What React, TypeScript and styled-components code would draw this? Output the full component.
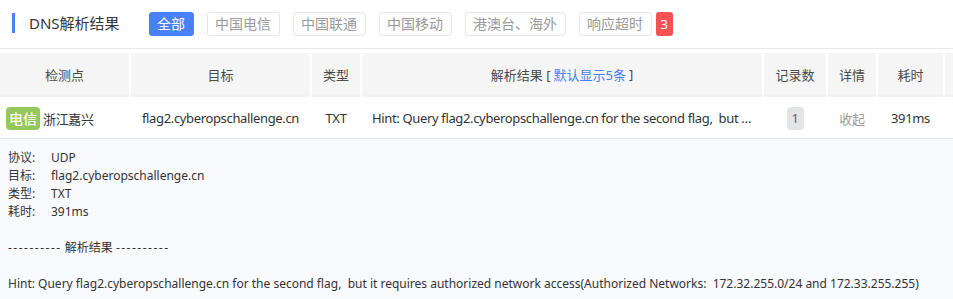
import styled, { createGlobalStyle } from "styled-components";

const GlobalStyle = createGlobalStyle`
  html, body {
    margin: 0;
    padding: 0;
    background: #fff;
    font-family: "Noto Sans", "Noto Sans CJK SC", sans-serif;
    color: #333;
  }
`;

const filters = ["全部", "中国电信", "中国联通", "中国移动", "港澳台、海外", "响应超时"];

const columns = [
  { key: "node", label: "检测点" },
  { key: "target", label: "目标" },
  { key: "type", label: "类型" },
  { key: "result", label: "解析结果" },
  { key: "count", label: "记录数" },
  { key: "detail", label: "详情" },
  { key: "time", label: "耗时" },
  { key: "extra", label: "" },
];

const detailLines = [
  { label: "协议:", value: "UDP" },
  { label: "目标:", value: "flag2.cyberopschallenge.cn" },
  { label: "类型:", value: "TXT" },
  { label: "耗时:", value: "391ms" },
];

const hint =
  "Hint: Query flag2.cyberopschallenge.cn for the second flag,  but it requires authorized network access(Authorized Networks:  172.32.255.0/24 and 172.33.255.255)";

export default function App() {
  return (
    <>
      <GlobalStyle />
      <StyledPanel>
        <div className="toolbar">
          <Title>DNS解析结果</Title>
          <div className="filters">
            {filters.map((f, i) => (
              <FilterButton key={f} $active={i === 0}>
                {f}
              </FilterButton>
            ))}
            <Badge>3</Badge>
          </div>
        </div>

        <TableGrid>
          {columns.map((c) => (
            <HeadCell key={c.key}>
              {c.key === "result" ? (
                <>
                  {c.label} [ <span className="blue">默认显示5条</span> ]
                </>
              ) : (
                c.label
              )}
            </HeadCell>
          ))}

          <BodyCell>
            <Tag>电信</Tag>
            浙江嘉兴
          </BodyCell>
          <BodyCell $center>flag2.cyberopschallenge.cn</BodyCell>
          <BodyCell $center>TXT</BodyCell>
          <BodyCell>
            <span className="ellipsis">{hint}</span>
          </BodyCell>
          <BodyCell $center>
            <CountChip>1</CountChip>
          </BodyCell>
          <BodyCell $center $muted>
            收起
          </BodyCell>
          <BodyCell $center>391ms</BodyCell>
          <BodyCell />
        </TableGrid>

        <Detail>
          {detailLines.map((l) => (
            <div className="line" key={l.label}>
              <span className="label">{l.label}</span>
              {l.value}
            </div>
          ))}
          <div className="line blank" />
          <div className="line">
            <span className="dashes">----------</span> 解析结果{" "}
            <span className="dashes">----------</span>
          </div>
          <div className="line blank" />
          <div className="line">{hint}</div>
        </Detail>
      </StyledPanel>
    </>
  );
}

const StyledPanel = styled.div`
  width: 953px;
  height: 299px;
  overflow: hidden;

  .toolbar {
    display: flex;
    align-items: center;
    padding-left: 12px;
    border-bottom: 1px solid #e8eaee;
    box-sizing: border-box;
    height: 49px;
  }

  .filters {
    display: flex;
    align-items: center;
    gap: 13px;
    margin-left: 29px;
    margin-top: -1px;
  }
`;

const Title = styled.div`
  border-left: 3px solid #4680f8;
  height: 20px;
  line-height: 20px;
  padding-left: 14px;
  font-size: 15px;
  color: #33373d;
  margin-top: -2px;
`;

const FilterButton = styled.div<{ $active?: boolean }>`
  height: 24px;
  box-sizing: border-box;
  padding: 0 7.5px;
  line-height: 22px;
  font-size: 14px;
  border-radius: 3px;
  border: 1px solid ${({ $active }) => ($active ? "#4a80f7" : "#e6e6e6")};
  background: ${({ $active }) => ($active ? "#4a80f7" : "#fff")};
  color: ${({ $active }) => ($active ? "#fff" : "#9a9a9a")};
`;

const Badge = styled.div`
  margin-left: -9px;
  height: 24px;
  min-width: 17px;
  box-sizing: border-box;
  border-radius: 3px;
  background: #f55353;
  color: #fff;
  font-size: 13px;
  line-height: 24px;
  text-align: center;
`;

const TableGrid = styled.div`
  display: grid;
  grid-template-columns: 129px 179px 48px 400px 62px 48px 65px 1fr;
  column-gap: 2px;
  padding-top: 4px;
  border-bottom: 1px solid #e6eaf0;
`;

const HeadCell = styled.div`
  height: 42px;
  background: #f5f5f5;
  border-bottom: 2px solid #eef1f6;
  display: flex;
  align-items: center;
  justify-content: center;
  font-size: 13px;
  color: #4a4a4a;
  white-space: nowrap;

  .blue {
    color: #4a80f7;
    margin: 0 3px;
  }
`;

const BodyCell = styled.div<{ $center?: boolean; $muted?: boolean }>`
  height: 40px;
  margin-top: 1px;
  display: flex;
  align-items: center;
  justify-content: ${({ $center }) => ($center ? "center" : "flex-start")};
  padding: ${({ $center }) => ($center ? "0" : "0 0 0 6px")};
  font-size: 13px;
  letter-spacing: -0.35px;
  color: ${({ $muted }) => ($muted ? "#9a9a9a" : "#333")};
  white-space: nowrap;
  min-width: 0;

  .ellipsis {
    display: block;
    overflow: hidden;
    text-overflow: ellipsis;
    white-space: pre;
    padding: 0 10px 0 4px;
  }
`;

const Tag = styled.span`
  display: inline-block;
  height: 23px;
  line-height: 23px;
  padding: 0 3px;
  border-radius: 4px;
  background: #94c85b;
  color: #fff;
  font-size: 14px;
  font-weight: 500;
  letter-spacing: 0;
  margin-right: 3px;
`;

const CountChip = styled.span`
  display: inline-block;
  height: 23px;
  line-height: 23px;
  min-width: 17px;
  text-align: center;
  border-radius: 4px;
  background: #e3e4e6;
  color: #666;
  font-size: 13px;
`;

const Detail = styled.div`
  background: #f9fafd;
  height: 200px;
  padding: 10px 8px;
  font-size: 12px;
  color: #333;

  .line {
    line-height: 18px;
    height: 18px;
    white-space: pre;
  }

  .label {
    display: inline-block;
    width: 43px;
  }

  .dashes {
    letter-spacing: 1.5px;
  }
`;
